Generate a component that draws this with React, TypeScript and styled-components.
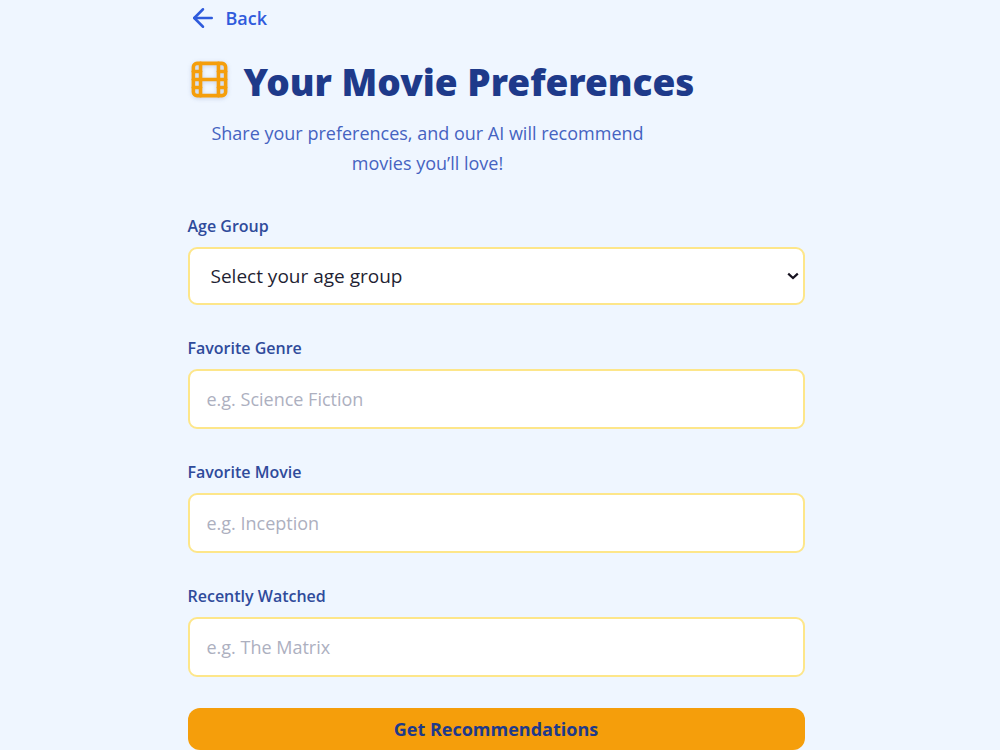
import React from "react";
import styled, { createGlobalStyle } from "styled-components";
import { ArrowLeft, Film } from "lucide-react";

const GlobalStyle = createGlobalStyle`
  *, *::before, *::after { box-sizing: border-box; }
  body {
    margin: 0;
    padding-right: 8px;
    background: #eff6ff;
    color: #1e3a8a;
    font-family: "Open Sans", "Noto Sans", sans-serif;
  }
`;

const Page = styled.main`
  width: 100%;
  max-width: 657px;
  margin: 0 auto;
  padding: 0 20px;
`;

const BackLink = styled.a`
  display: inline-flex;
  align-items: center;
  gap: 8px;
  height: 36px;
  color: #2f5bdc;
  font-size: 18px;
  font-weight: 600;
  line-height: 28px;
  text-decoration: none;
`;

const TitleRow = styled.header`
  display: flex;
  align-items: flex-start;
  gap: 13px;
  margin-top: 20px;
`;

const FilmIcon = styled(Film)`
  flex: none;
  color: #f59e0b;
  filter: drop-shadow(0 1px 2px rgba(30, 58, 138, 0.2));
`;

const Title = styled.h1`
  margin: 0;
  font-family: "Noto Sans", "Open Sans", sans-serif;
  font-size: 37px;
  font-weight: 900;
  line-height: 48px;
`;

const Subtitle = styled.p`
  max-width: 480px;
  margin: 12px 0 36px;
  color: #4563c1;
  font-size: 18px;
  line-height: 30px;
  text-align: center;
`;

const Form = styled.form`
  display: flex;
  flex-direction: column;
  gap: 31px;
`;

const Field = styled.div`
  display: flex;
  flex-direction: column;
  gap: 9px;
`;

const Label = styled.label`
  color: #2f4b9b;
  font-size: 16px;
  font-weight: 600;
  line-height: 24px;
`;

const controlStyles = `
  width: 100%;
  border: 2px solid #fde68a;
  border-radius: 9px;
  background-color: #ffffff;
  font-family: inherit;
  line-height: 28px;
`;

const SelectWrap = styled.div`
  position: relative;
  display: flex;
`;

const Select = styled.select`
  ${controlStyles}
  appearance: none;
  height: 58px;
  padding: 0 32px 0 21px;
  color: #1f1f33;
  font-size: 19px;
`;

const Chevron = styled.svg`
  position: absolute;
  top: 0;
  bottom: 0;
  right: 6px;
  margin: auto 0;
  pointer-events: none;
`;

const Input = styled.input`
  ${controlStyles}
  height: 60px;
  padding: 0 17px;
  color: #1f1f33;
  font-size: 18px;

  &::placeholder {
    color: #adb0bf;
    opacity: 1;
  }
`;

const SubmitButton = styled.button`
  height: 42px;
  border: 0;
  border-radius: 12px;
  background: #f59e0b;
  color: #1e3a8a;
  font-family: inherit;
  font-size: 18px;
  font-weight: 700;
  line-height: 28px;
`;

const textFields = [
  { id: "genre", label: "Favorite Genre", placeholder: "e.g. Science Fiction" },
  { id: "movie", label: "Favorite Movie", placeholder: "e.g. Inception" },
  { id: "recent", label: "Recently Watched", placeholder: "e.g. The Matrix" },
];

export default function App() {
  return (
    <>
      <GlobalStyle />
      <Page>
        <BackLink href="#">
          <ArrowLeft size={30} aria-hidden />
          Back
        </BackLink>
        <TitleRow>
          <FilmIcon size={43} aria-hidden />
          <Title>Your Movie Preferences</Title>
        </TitleRow>
        <Subtitle>
          Share your preferences, and our AI will recommend movies you’ll love!
        </Subtitle>
        <Form onSubmit={(event) => event.preventDefault()}>
          <Field>
            <Label htmlFor="age">Age Group</Label>
            <SelectWrap>
              <Select id="age" defaultValue="">
                <option value="">Select your age group</option>
                <option value="child">Under 13</option>
                <option value="teen">13–17</option>
                <option value="adult">18 and over</option>
              </Select>
              <Chevron width="12" height="8" viewBox="0 0 12 8" aria-hidden>
                <path
                  d="M1.2 1.6 6 6l4.8-4.4"
                  fill="none"
                  stroke="#16121f"
                  strokeWidth="2.2"
                />
              </Chevron>
            </SelectWrap>
          </Field>
          {textFields.map((field) => (
            <Field key={field.id}>
              <Label htmlFor={field.id}>{field.label}</Label>
              <Input id={field.id} type="text" placeholder={field.placeholder} />
            </Field>
          ))}
          <SubmitButton type="submit">Get Recommendations</SubmitButton>
        </Form>
      </Page>
    </>
  );
}
